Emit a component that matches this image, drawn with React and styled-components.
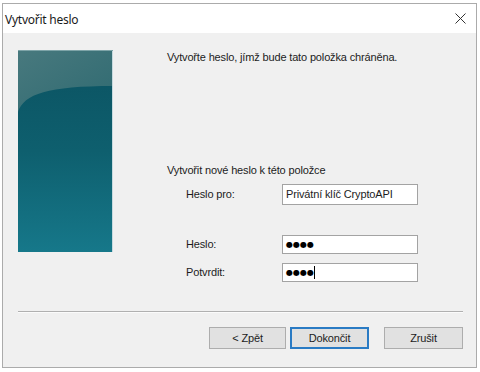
import React from "react";
import styled, { createGlobalStyle } from "styled-components";

const Global = createGlobalStyle`
  html, body { margin: 0; padding: 0; background: #ffffff; }
  body { font-family: "Liberation Sans", Arial, sans-serif; }
  * { box-sizing: border-box; }
`;

const Window = styled.div`
  margin: 3px 0 0 2px;
  width: 475px;
  height: 365px;
  border: 1px solid #ababab;
  background: #f0f0f0;
  display: flex;
  flex-direction: column;
`;

const TitleBar = styled.div`
  height: 29px;
  background: #ffffff;
  display: flex;
  align-items: center;
  justify-content: space-between;
  padding: 2px 10px 0 2px;
`;

const Title = styled.span`
  font-family: "Noto Sans", "Segoe UI", sans-serif;
  font-size: 12px;
  letter-spacing: -0.25px;
  color: #1a1a1a;
`;

const CloseIcon = styled.svg`
  width: 11px;
  height: 11px;
  margin-top: -2px;
`;

const Main = styled.div`
  display: flex;
  padding: 17px 0 0 15px;
`;

const SideArt = styled.svg`
  width: 95px;
  height: 202px;
  flex: none;
  display: block;
`;

const Pane = styled.div`
  margin-left: 54px;
  display: flex;
  flex-direction: column;
  font-size: 11px;
  letter-spacing: -0.15px;
  color: #1c1c1c;
  line-height: 13px;
`;

const Intro = styled.div`
  margin-top: 1px;
`;

const Heading = styled.div`
  margin-top: 100px;
`;

const Row = styled.div`
  display: flex;
  align-items: center;
  padding-left: 19px;
  margin-top: ${(p) => p.$gap}px;
`;

const Label = styled.div`
  width: 96px;
`;

const Field = styled.div`
  width: 136px;
  height: ${(p) => p.$h}px;
  background: #ffffff;
  border: 1px solid #a3a3a3;
  display: flex;
  align-items: center;
  padding-left: 3px;
  color: #1c1c1c;
`;

const Dots = styled.span`
  font-family: "DejaVu Sans", sans-serif;
  font-size: 8px;
  letter-spacing: 0;
  color: #000;
`;

const Caret = styled.span`
  display: inline-block;
  width: 1px;
  height: 13px;
  background: #000;
  margin-left: 0px;
`;

const Separator = styled.div`
  margin: 29px 13px 0 15px;
  height: 1px;
  background: #b0b0b0;
  box-shadow: 0 1px 0 #fbfbfb;
`;

const Buttons = styled.div`
  display: flex;
  justify-content: flex-end;
  margin: 15px 13px 0 0;
`;

const Button = styled.div`
  width: ${(p) => p.$w}px;
  height: 22px;
  margin-left: ${(p) => p.$ml}px;
  background: #e1e1e1;
  border: 1px solid ${(p) => (p.$default ? "#2a7bc4" : "#adadad")};
  box-shadow: ${(p) => (p.$default ? "inset 0 0 0 1px #2a7bc4" : "none")};
  display: flex;
  align-items: center;
  justify-content: center;
  font-size: 11px;
  letter-spacing: -0.15px;
  color: #1c1c1c;
`;

export default function App() {
  return (
    <>
      <Global />
      <Window>
        <TitleBar>
          <Title>Vytvořit heslo</Title>
          <CloseIcon viewBox="0 0 11 11">
            <path d="M0.5 0.5 L10.5 10.5 M10.5 0.5 L0.5 10.5" stroke="#333" strokeWidth="1" fill="none" />
          </CloseIcon>
        </TitleBar>
        <Main>
          <SideArt viewBox="0 0 95 202">
            <defs>
              <linearGradient id="body" x1="0" y1="0" x2="0" y2="1">
                <stop offset="0" stopColor="#0b5261" />
                <stop offset="0.5" stopColor="#0e5f6e" />
                <stop offset="1" stopColor="#16788a" />
              </linearGradient>
              <linearGradient id="gloss" x1="0" y1="0" x2="1" y2="1">
                <stop offset="0" stopColor="#48797e" />
                <stop offset="1" stopColor="#2f6a71" />
              </linearGradient>
            </defs>
            <rect x="0" y="0" width="95" height="202" fill="url(#body)" />
            <path d="M0 62 C 6 44, 30 36, 95 36 L95 0 L0 0 Z" fill="url(#gloss)" />
            <rect x="94" y="0" width="1" height="202" fill="#c7dadf" />
            <rect x="0" y="0" width="95" height="1" fill="#7ea4a8" />
          </SideArt>
          <Pane>
            <Intro>Vytvořte heslo, jímž bude tato položka chráněna.</Intro>
            <Heading>Vytvořit nové heslo k této položce</Heading>
            <Row $gap={7}>
              <Label>Heslo pro:</Label>
              <Field $h={21}>Privátní klíč CryptoAPI</Field>
            </Row>
            <Row $gap={30}>
              <Label>Heslo:</Label>
              <Field $h={19}>
                <Dots>●●●●</Dots>
              </Field>
            </Row>
            <Row $gap={9}>
              <Label>Potvrdit:</Label>
              <Field $h={19}>
                <Dots>●●●●</Dots>
                <Caret />
              </Field>
            </Row>
          </Pane>
        </Main>
        <Separator />
        <Buttons>
          <Button $w={77} $ml={0}>&lt; Zpět</Button>
          <Button $w={79} $ml={4} $default>Dokončit</Button>
          <Button $w={79} $ml={15}>Zrušit</Button>
        </Buttons>
      </Window>
    </>
  );
}
